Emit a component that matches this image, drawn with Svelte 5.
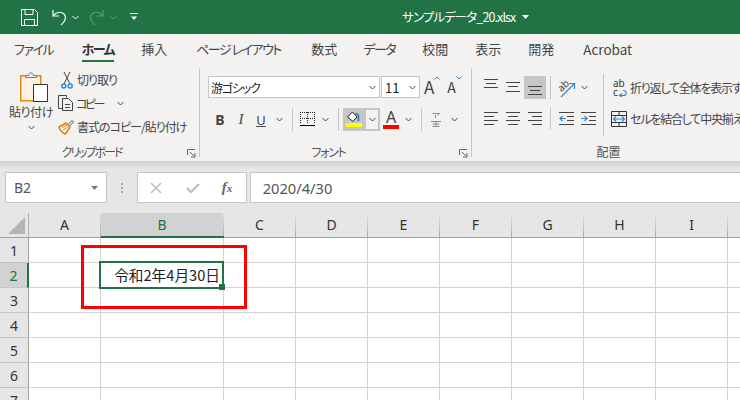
<script>
  const tabs = [
    { label: "ファイル", kana: true },
    { label: "ホーム", kana: true },
    { label: "挿入" },
    { label: "ページ レイアウト", kana: true },
    { label: "数式" },
    { label: "データ", kana: true },
    { label: "校閲" },
    { label: "表示" },
    { label: "開発" },
    { label: "Acrobat" }
  ]
  const columns = ["A", "B", "C", "D", "E", "F", "G", "H", "I", ""]
  const rows = [1, 2, 3, 4, 5, 6, 7]
</script>

{#snippet chev(color = "#444")}
  <svg class="chev" width="7" height="5" viewBox="0 0 7 5"><path d="M.5 1 3.5 4 6.5 1" fill="none" stroke={color} /></svg>
{/snippet}

{#snippet launcher()}
  <svg class="launcher" width="9" height="9" viewBox="0 0 9 9"><path d="M.5 6V.5H8M3 3l4.500 4.500M8 4v4H4" fill="none" stroke="#666" /></svg>
{/snippet}

{#snippet lines(y, x1, x2)}
  <svg width="16" height="18" viewBox="0 0 16 18">
    {#each y as v, i}
      <path d="M{x1[i]} {v}.5H{x2[i]}" stroke="#444" />
    {/each}
  </svg>
{/snippet}

<div class="app">
  <header class="title">
    <div class="qat">
      <svg width="17" height="17" viewBox="0 0 17 17" fill="none" stroke="#fff"><path d="M.5.5h13l3 3v13H.5zM4 .5v5h8v-5M3.500 16.500v-6h10v6" /></svg>
      <svg class="undo" width="15" height="17" viewBox="0 0 15 17" fill="none" stroke="#fff" stroke-width="1.200"><path d="M1 1v6h6M1.500 6.500C4 3 9 2.500 12 5c2.500 2.500 2 7-3 11" /></svg>
      {@render chev("#fff")}
      <svg class="redo" width="15" height="17" viewBox="0 0 15 17" fill="none" stroke="#5c9a7a" stroke-width="1.200"><path d="M14 1v6H8M13.500 6.500C11 3 6 2.500 3 5 .5 7.500 1 12 6 16" /></svg>
      <span class="redo-chev">{@render chev("#5c9a7a")}</span>
      <svg class="custom" width="8" height="8" viewBox="0 0 8 8" fill="#fff"><path d="M0 0h8v1H0zM1 3.500h6L4 7z" /></svg>
    </div>
    <div class="filename">サンプルデータ_20.xlsx</div>
    <svg class="name-caret" width="7" height="4" viewBox="0 0 7 4" fill="#fff"><path d="M0 0h7L3.500 4z" /></svg>
  </header>

  <nav class="tabs">
    {#each tabs as tab, i}
      <div class="tab" class:kana={tab.kana} class:active={i === 1}>{tab.label}</div>
    {/each}
  </nav>

  <section class="ribbon">
    <div class="group clipboard">
      <div class="group-body">
        <div class="paste">
          <svg class="paste-icon" width="28" height="33" viewBox="0 0 28 33">
            <path d="M.75 4.750h20v25h-20z" fill="#fdf0e0" stroke="#e8870e" stroke-width="1.500" />
            <path d="M3 7h15.500v20.500H3z" fill="#fff3e4" />
            <path d="M5.500 6.500V4.500h3c.5-3.500 4.500-3.500 5 0h3v2z" fill="#f3f2f1" stroke="#777" />
            <path d="M13.500 13.500h14v17h-14z" fill="#fff" stroke="#333" />
          </svg>
          <span class="paste-label">貼り付け</span>
          {@render chev()}
        </div>
        <div class="clip-list">
          <div class="clip-item">
            <svg class="cut" width="12" height="18" viewBox="0 0 12 18" fill="none"><path d="M3 1l6 12M9 1L3 13" stroke="#444" /><circle cx="2.800" cy="15" r="2" stroke="#2b88d8" stroke-width="1.500" /><circle cx="9.200" cy="15" r="2" stroke="#2b88d8" stroke-width="1.500" /></svg>
            <span class="clip-cut">切り取り</span>
          </div>
          <div class="clip-item">
            <svg width="16" height="16" viewBox="0 0 16 16" fill="none" stroke="#444"><path d="M4.500 13.500H.5V.5h8v2" /><path d="M4.500 3.500h6l4 4v8h-10zM7 9.500h5M7 12.500h5" fill="#f3f2f1" /></svg>
            <span class="clip-copy">コピー</span>
            <span class="copy-chev">{@render chev()}</span>
          </div>
          <div class="clip-item">
            <svg width="17" height="17" viewBox="0 0 17 17"><path d="M10 7 14 2.500l1.500 1.500L11 8.500z" fill="#fff" stroke="#555" /><path d="M1 9 8 5l4 4-4.500 7C5 15 2 12 1 9z" fill="#fff" stroke="#e8780e" stroke-width="1.500" /><path d="M4 9.500l6-3M5 12l5-3" stroke="#e8780e" /></svg>
            <span class="clip-format">書式のコピー/貼り付け</span>
          </div>
        </div>
      </div>
      <div class="group-label">クリップボード</div>
      {@render launcher()}
    </div>

    <div class="group font">
      <div class="group-body stack">
        <div class="row row-top">
          <div class="select font-name"><span>游ゴシック</span>{@render chev()}</div>
          <div class="select font-size"><span>11</span>{@render chev()}</div>
          <span class="grow">A<svg width="6" height="4" viewBox="0 0 6 4"><path d="M.5 3.500 3 1l2.500 2.500" fill="none" stroke="#2b88d8" /></svg></span>
          <span class="shrink">A<svg width="6" height="4" viewBox="0 0 6 4"><path d="M.5.5 3 3 5.500.5" fill="none" stroke="#2b88d8" /></svg></span>
        </div>
        <div class="row row-format">
          <b class="fmt bold">B</b>
          <i class="fmt italic">I</i>
          <span class="fmt under">U</span>
          <span class="fmt-chev">{@render chev()}</span>
          <span class="sep"></span>
          <svg class="borders" width="15" height="15" viewBox="0 0 15 15" fill="none" shape-rendering="crispEdges"><path d="M0 .5h15M.5 0v12M14.500 0v12M0 6.500h15M7.500 0v12" stroke="#222" stroke-dasharray="1 1" /><path d="M0 13.500h15" stroke="#000" stroke-width="1.500" /></svg>
          <span class="border-chev">{@render chev()}</span>
          <span class="sep"></span>
          <div class="fill">
            <svg width="16" height="12" viewBox="0 0 16 12"><path d="M1.500 6 6.500 1l4.500 5-4 4.500z" fill="#fff" stroke="#222" /><path d="M12.500 10V5C12.500 3.500 11 2.500 9.500 3" fill="none" stroke="#1e6fb8" stroke-width="1.500" /></svg>
            <span class="swatch yellow"></span>
          </div>
          <div class="fill-drop">{@render chev()}</div>
          <div class="color">
            <span class="color-a">A</span>
            <span class="swatch red"></span>
          </div>
          <span class="color-chev">{@render chev()}</span>
          <span class="sep"></span>
          <svg class="furi" width="10" height="16" viewBox="0 0 10 16" fill="none" stroke="#888"><path d="M1.500 1.500h7l-2 2M4.500 3v3M0 9.500h10M1.500 12h7M1.500 14.500h7M5 9v6" /></svg>
          <span class="furi-chev">{@render chev()}</span>
        </div>
      </div>
      <div class="group-label">フォント</div>
      {@render launcher()}
    </div>

    <div class="group align">
      <div class="align-left">
        <div class="align-row">
          <span class="aic">{@render lines([0, 4, 8], [1, 3, 1], [15, 13, 15])}</span>
          <span class="aic">{@render lines([3, 7, 12], [1, 3, 1], [15, 13, 15])}</span>
          <span class="aic on">{@render lines([7, 11, 15], [1, 3, 1], [15, 13, 15])}</span>
          <span class="sep"></span>
          <svg class="orient" width="18" height="22" viewBox="0 0 18 22" fill="none">
            <text x="1" y="13" transform="rotate(-45 5 11)" fill="#444" font-size="10" font-family="Noto Sans, sans-serif">ab</text>
            <path d="M3 20 16 7M11 6.500h5.500V12" stroke="#2b88d8" stroke-width="1.200" />
          </svg>
          <span class="orient-chev">{@render chev()}</span>
        </div>
        <div class="align-row lower">
          <span class="aic">{@render lines([2, 6, 10, 14], [1, 1, 1, 1], [15, 11, 15, 11])}</span>
          <span class="aic">{@render lines([2, 6, 10, 14], [1, 3, 1, 3], [15, 13, 15, 13])}</span>
          <span class="aic">{@render lines([2, 6, 10, 14], [1, 5, 1, 5], [15, 15, 15, 15])}</span>
          <span class="sep"></span>
          <svg class="indent" width="15" height="14" viewBox="0 0 15 14" fill="none"><path d="M0 .5h15M8 4.500h7M8 8.500h7M0 12.500h15" stroke="#444" /><path d="M1 6.500h6M3.500 4 1 6.500 3.500 9" stroke="#2b88d8" stroke-width="1.200" /></svg>
          <svg class="outdent" width="15" height="14" viewBox="0 0 15 14" fill="none"><path d="M0 .5h15M8 4.500h7M8 8.500h7M0 12.500h15" stroke="#444" /><path d="M0 6.500h6M3.500 4 6 6.500 3.500 9" stroke="#2b88d8" stroke-width="1.200" /></svg>
        </div>
      </div>
      <span class="tall-sep"></span>
      <div class="wrap-col">
        <div class="wrap-item">
          <span class="abc"><span>ab</span><span class="c">c<svg width="9" height="9" viewBox="0 0 9 9" fill="none"><path d="M2 7.500h3.500c3.500 0 3.500-5 0-5H5M4 5.500l-2.500 2 2.500 1.500" stroke="#2b88d8" stroke-width="1.200" /></svg></span></span>
          <span>折り返して全体を表示する</span>
        </div>
        <div class="wrap-item merge">
          <svg width="16" height="16" viewBox="0 0 16 16" fill="none"><path d="M.5.500h15v15H.5zM.5 4.500h15M.5 11.500h15M8 .5v4M8 11.500v4" stroke="#333" /><path d="M3 8h10M5 5.500 2.500 8 5 10.500M11 5.500 13.500 8 11 10.500" stroke="#2b88d8" stroke-width="1.200" /></svg>
          <span>セルを結合して中央揃え</span>
        </div>
      </div>
      <div class="group-label">配置</div>
    </div>
  </section>

  <div class="formula-area">
    <div class="namebox">
      <span>B2</span>
      <svg width="7" height="4" viewBox="0 0 7 4" fill="#777"><path d="M0 0h7L3.500 4z" /></svg>
    </div>
    <div class="dots"><i></i><i></i><i></i></div>
    <div class="fx-box">
      <svg width="12" height="12" viewBox="0 0 12 12" fill="none" stroke="#bbb" stroke-width="1.500"><path d="M1 1l10 10M11 1 1 11" /></svg>
      <svg width="14" height="12" viewBox="0 0 14 12" fill="none" stroke="#bbb" stroke-width="2"><path d="M1 6l4 4 8-8" /></svg>
      <span class="fx">f<small>x</small></span>
    </div>
    <div class="formula">2020/4/30</div>
  </div>

  <div class="sheet">
    <div class="corner"><span></span></div>
    {#each columns as c}
      <div class="col-head" class:selected={c === "B"}>{c}</div>
    {/each}
    {#each rows as r}
      <div class="row-head" class:selected={r === 2}>{r}</div>
      {#each columns as c}
        <div class="cell">
          {#if r === 2 && c === "B"}
            <span class="value">令和2年4月30日</span>
            <span class="selection"><i></i></span>
            <span class="callout"></span>
          {/if}
        </div>
      {/each}
    {/each}
  </div>
</div>

<style>
  :global(body) {
    margin: 0;
    background: #fff;
  }
  .app {
    width: 740px;
    height: 400px;
    overflow: hidden;
    font-family: "Noto Sans CJK JP", "Noto Sans", sans-serif;
    font-feature-settings: "palt";
    color: #444;
    background: #f3f2f1;
  }
  svg {
    display: block;
    flex: none;
  }

  .title {
    height: 34px;
    background: #217346;
    display: flex;
    align-items: center;
    color: #fff;
  }
  .qat {
    width: 402px;
    padding: 0 0 0 21px;
    box-sizing: border-box;
    display: flex;
    align-items: center;
  }
  .undo { margin-left: 14px; }
  .qat > .chev { margin-left: 5px; }
  .redo { margin-left: 10px; }
  .redo-chev { margin-left: 6px; }
  .custom { margin-left: 13px; }
  .filename {
    font-size: 12.500px;
    letter-spacing: -0.900px;
    line-height: 32px;
    width: 120px;
    white-space: nowrap;
  }

  .tabs {
    height: 34px;
    display: flex;
    padding-left: 14px;
    gap: 27px;
    font-size: 13px;
    line-height: 30px;
    background: #f3f2f1;
    white-space: pre;
  }
  .tab { height: 28px; box-sizing: border-box; }
  .tab.kana { letter-spacing: -1.500px; }
  .tab.active {
    font-weight: 700;
    color: #333;
    border-bottom: 2px solid #217346;
  }
  .tab:nth-child(2) { margin-left: 1.500px; }
  .tab:nth-child(4) { margin-left: 2px; }
  .tab:nth-child(5) { margin-left: 3.500px; }
  .tab:nth-child(6) { margin-left: -1px; }
  .tab:nth-child(10) { margin-left: 2px; font-size: 13.500px; }

  .ribbon {
    height: 93px;
    display: flex;
    font-size: 12px;
    background: #f3f2f1;
    overflow: hidden;
  }
  .group {
    position: relative;
    box-sizing: border-box;
    height: 89px;
    border-right: 1px solid #c6c6c6;
    flex: none;
  }
  .group-label {
    position: absolute;
    bottom: -5px;
    left: 0;
    right: 0;
    text-align: center;
    font-size: 12px;
    line-height: 20px;
    color: #555;
  }
  .clipboard .group-label { padding-right: 16px; letter-spacing: -2px; }
  .font .group-label { padding-right: 14px; letter-spacing: -1.300px; }
  .align .group-label { padding-right: 6px; }
  .launcher {
    position: absolute;
    right: 3px;
    bottom: -1px;
  }

  .clipboard { width: 200px; }
  .group-body { display: flex; }
  .paste {
    width: 46px;
    margin-left: 8px;
    padding-top: 3px;
    display: flex;
    flex-direction: column;
    align-items: center;
  }
  .paste-icon { align-self: flex-start; margin-left: 12px; }
  .paste-label { line-height: 18px; margin-top: -1px; white-space: nowrap; letter-spacing: -0.400px; }
  .paste .chev { margin-top: 4px; }
  .clip-list {
    margin-left: 4px;
    display: flex;
    flex-direction: column;
  }
  .clip-item {
    height: 23.500px;
    display: flex;
    align-items: center;
    white-space: nowrap;
  }
  .cut { margin-left: 3px; }
  .clip-cut { margin-left: 4px; letter-spacing: -1px; }
  .clip-copy { margin-left: 2px; letter-spacing: -2.500px; }
  .copy-chev { margin-left: 14px; }
  .clip-format { margin-left: 2px; letter-spacing: -1px; }

  .font { width: 272px; padding-left: 8px; }
  .stack { flex-direction: column; }
  .row { display: flex; align-items: center; }
  .row-top { margin-top: 8px; height: 22px; }
  .row-format { margin-top: 10px; height: 23px; }
  .select {
    box-sizing: border-box;
    height: 22px;
    background: #fff;
    border: 1px solid #c6c6c6;
    display: flex;
    align-items: center;
    justify-content: space-between;
    padding: 0 3px 0 2px;
    color: #222;
    font-size: 12px;
  }
  .font-name { width: 172px; letter-spacing: -1.200px; }
  .font-size { width: 39px; margin-left: 1px; padding-left: 3px; font-size: 13px; letter-spacing: 0; }
  .grow, .shrink {
    display: flex;
    font-size: 17px;
    line-height: 22px;
    color: #444;
  }
  .grow { margin-left: 4px; }
  .shrink { margin-left: 7px; font-size: 14px; }
  .fmt {
    font-family: "Liberation Serif", serif;
    width: 12px;
    text-align: center;
    font-size: 15px;
  }
  .bold { font-family: "Noto Sans", sans-serif; margin-left: 6px; font-size: 14px; }
  .italic { margin-left: 9px; }
  .under {
    font-family: "Noto Sans", sans-serif;
    text-decoration: underline;
    margin-left: 8px;
    font-size: 13px;
  }
  .fmt-chev { margin-left: 9px; }
  .sep {
    width: 1px;
    height: 23px;
    background: #c6c6c6;
    flex: none;
  }
  .fmt-chev + .sep { margin-left: 9px; }
  .borders { margin-left: 7px; }
  .border-chev { margin-left: 7px; }
  .border-chev + .sep { margin-left: 9px; }
  .fill {
    box-sizing: border-box;
    width: 23px;
    height: 23px;
    margin-left: 4px;
    background: #c6c6c6;
    padding: 3px 3px 0;
  }
  .swatch { display: block; height: 4px; width: 16px; }
  .yellow { background: #ffff00; }
  .red { background: #ff0000; }
  .fill-drop {
    box-sizing: border-box;
    width: 14px;
    height: 23px;
    border: 2px solid #c6c6c6;
    border-left: 0;
    display: flex;
    align-items: center;
    justify-content: center;
  }
  .color { margin-left: 3px; width: 16px; }
  .color-a { display: block; font-size: 16px; line-height: 15px; text-align: center; font-family: "Noto Sans", sans-serif; }
  .color-chev { margin-left: 6px; }
  .color-chev + .sep { margin-left: 9px; }
  .furi { margin-left: 9px; }
  .furi-chev { margin-left: 10px; }

  .align { flex: 1; display: flex; border-right: 0; }
  .align-left { width: 131px; padding-left: 8px; box-sizing: border-box; }
  .align-row {
    margin-top: 8px;
    height: 23px;
    display: flex;
    align-items: center;
  }
  .aic {
    width: 22px;
    height: 23px;
    padding-top: 3px;
    box-sizing: border-box;
    display: flex;
    justify-content: center;
    flex: none;
  }
  .aic.on { background: #c6c6c6; }
  .aic + .sep { margin-left: 4px; }
  .orient { margin-left: 7px; }
  .orient-chev { margin-left: 5px; }
  .indent { margin-left: 8px; }
  .outdent { margin-left: 7px; }
  .tall-sep {
    width: 1px;
    height: 62px;
    margin-top: 6px;
    background: #c6c6c6;
    flex: none;
  }
  .wrap-col {
    margin-left: 7px;
    padding-top: 8px;
    white-space: nowrap;
    font-size: 12px;
    letter-spacing: -1.200px;
  }
  .wrap-item {
    height: 23px;
    display: flex;
    align-items: center;
    gap: 4px;
  }
  .wrap-item.merge { margin-top: 8px; gap: 3px; }
  .wrap-item .abc {
    display: flex;
    flex-direction: column;
    width: 13px;
    margin-left: 2px;
    font-family: "Noto Sans", sans-serif;
    font-size: 10px;
    line-height: 9px;
    letter-spacing: 0;
    color: #333;
  }
  .abc .c { display: flex; align-items: center; }

  .formula-area {
    height: 52px;
    box-sizing: border-box;
    padding-top: 11px;
    display: flex;
    align-items: flex-start;
    background: linear-gradient(#d2d2d2, #e6e6e6 8px);
  }
  .namebox, .fx-box, .formula {
    box-sizing: border-box;
    height: 31px;
    background: #fff;
    border: 1px solid #c6c6c6;
    display: flex;
    align-items: center;
  }
  .namebox {
    width: 102px;
    margin-left: 5px;
    padding: 0 8px;
    justify-content: space-between;
    font-family: "Noto Sans", sans-serif;
    font-size: 14px;
    color: #555;
  }
  .dots {
    width: 30px;
    height: 31px;
    display: flex;
    flex-direction: column;
    align-items: center;
    justify-content: center;
    gap: 2px;
  }
  .dots i { width: 2px; height: 2px; background: #aaa; }
  .fx-box {
    width: 110px;
    padding-left: 12px;
    gap: 24px;
  }
  .fx {
    font-family: "Liberation Serif", serif;
    font-style: italic;
    font-weight: 700;
    font-size: 15px;
    color: #666;
    margin-left: -2px;
  }
  .fx small { font-size: 11px; }
  .formula {
    width: 491px;
    margin-left: 3px;
    border-right: 0;
    padding-left: 12px;
    font-family: "Noto Sans", sans-serif;
    font-size: 14.670px;
    color: #555;
  }

  .sheet {
    display: grid;
    grid-template-columns: 29px 72px 123px repeat(7, 72px) 72px;
    grid-auto-rows: 25px;
    background: #fff;
  }
  .corner {
    background: #e6e6e6;
    border-right: 1px solid #b0b0b0;
    border-bottom: 1px solid #9f9f9f;
    box-sizing: border-box;
    padding: 4px 0 0 8px;
  }
  .corner span {
    display: block;
    width: 17px;
    height: 17px;
    background: #b4b4b4;
    clip-path: polygon(100% 0, 100% 100%, 0 100%);
  }
  .col-head {
    position: relative;
    box-sizing: border-box;
    background: #e6e6e6;
    border-right: 1px solid;
    border-image: linear-gradient(#e6e6e6, #a5a5a5) 1;
    text-align: center;
    font-family: "Noto Sans", sans-serif;
    font-size: 14px;
    line-height: 24px;
    color: #333;
  }
  .col-head::after {
    content: "";
    position: absolute;
    left: 0;
    right: -1px;
    bottom: 0;
    height: 1px;
    background: #9f9f9f;
  }
  .col-head.selected {
    background: #d2d2d2;
    color: #217346;
  }
  .col-head.selected::after {
    height: 2px;
    background: #217346;
  }
  .row-head {
    position: relative;
    box-sizing: border-box;
    background: #e6e6e6;
    border-right: 1px solid #9f9f9f;
    border-bottom: 1px solid #c6c6c6;
    text-align: center;
    font-family: "Noto Sans", sans-serif;
    font-size: 14px;
    line-height: 25px;
    color: #333;
  }
  .row-head.selected {
    background: #d2d2d2;
    color: #217346;
    border-right: 2px solid #217346;
  }
  .cell {
    position: relative;
    box-sizing: border-box;
    border-right: 1px solid #d4d4d4;
    border-bottom: 1px solid #d4d4d4;
    background: #fff;
  }
  .value {
    position: absolute;
    right: 3px;
    top: 0;
    line-height: 24px;
    font-size: 14.670px;
    color: #222;
    white-space: nowrap;
    font-feature-settings: normal;
  }
  .selection {
    position: absolute;
    z-index: 1;
    left: -2px;
    top: -2px;
    width: 125px;
    height: 28px;
    box-sizing: border-box;
    border: 2px solid #217346;
  }
  .selection i {
    position: absolute;
    right: -3px;
    bottom: -3px;
    width: 6px;
    height: 6px;
    background: #217346;
  }
  .callout {
    position: absolute;
    left: -20px;
    top: -18px;
    width: 166px;
    height: 64px;
    box-sizing: border-box;
    border: 3px solid #ff0000;
    z-index: 2;
  }
</style>
